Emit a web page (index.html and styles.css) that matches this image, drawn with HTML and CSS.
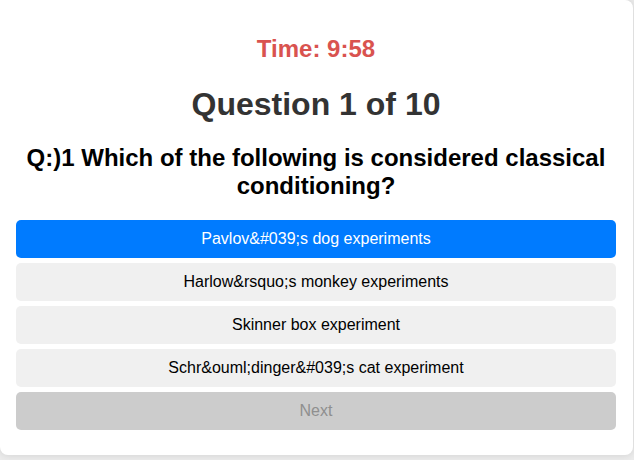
FILE: index.html
```html
<!DOCTYPE html>
<html>
<head>
<meta charset="utf-8">
<link rel="stylesheet" href="styles.css">
</head>
<body>
<div class="card">
  <div class="timer">Time: 9:58</div>
  <h1 class="title">Question 1 of 10</h1>
  <h2 class="question">Q:)1 Which of the following is considered classical conditioning?</h2>
  <button class="option selected">Pavlov&amp;#039;s dog experiments</button>
  <button class="option">Harlow&amp;rsquo;s monkey experiments</button>
  <button class="option">Skinner box experiment</button>
  <button class="option">Schr&amp;ouml;dinger&amp;#039;s cat experiment</button>
  <button class="option next" disabled>Next</button>
</div>
</body>
</html>
```
FILE: styles.css
```css
html, body {
  margin: 0;
  padding: 0;
}
body {
  background: #ececec;
  font-family: "Liberation Sans", Arial, sans-serif;
  height: 460px;
  overflow: hidden;
}
.card {
  width: 600px;
  padding: 20px 17px 20px 16px;
  background: #fff;
  border-radius: 0 8px 8px 8px;
  box-shadow: 0 0 8px rgba(0, 0, 0, 0.12);
  text-align: center;
}
.timer {
  margin-top: 15px;
  font-size: 24px;
  font-weight: bold;
  color: #d9534f;
}
.title {
  font-size: 32px;
  font-weight: bold;
  color: #333;
  margin: 23px 0 21.44px;
}
.question {
  font-size: 24px;
  font-weight: bold;
  color: #000;
  margin: 19.92px 0;
}
.option {
  display: block;
  width: 100%;
  margin: 5px 0;
  padding: 10px;
  font-family: "Liberation Sans", Arial, sans-serif;
  font-size: 16px;
  line-height: 18px;
  color: #000;
  background: #f0f0f0;
  border: none;
  border-radius: 5px;
  text-align: center;
}
.option.selected {
  background: #007bff;
  color: #fff;
}
.option.next {
  background: #ccc;
  color: #8f8f8f;
}
```
